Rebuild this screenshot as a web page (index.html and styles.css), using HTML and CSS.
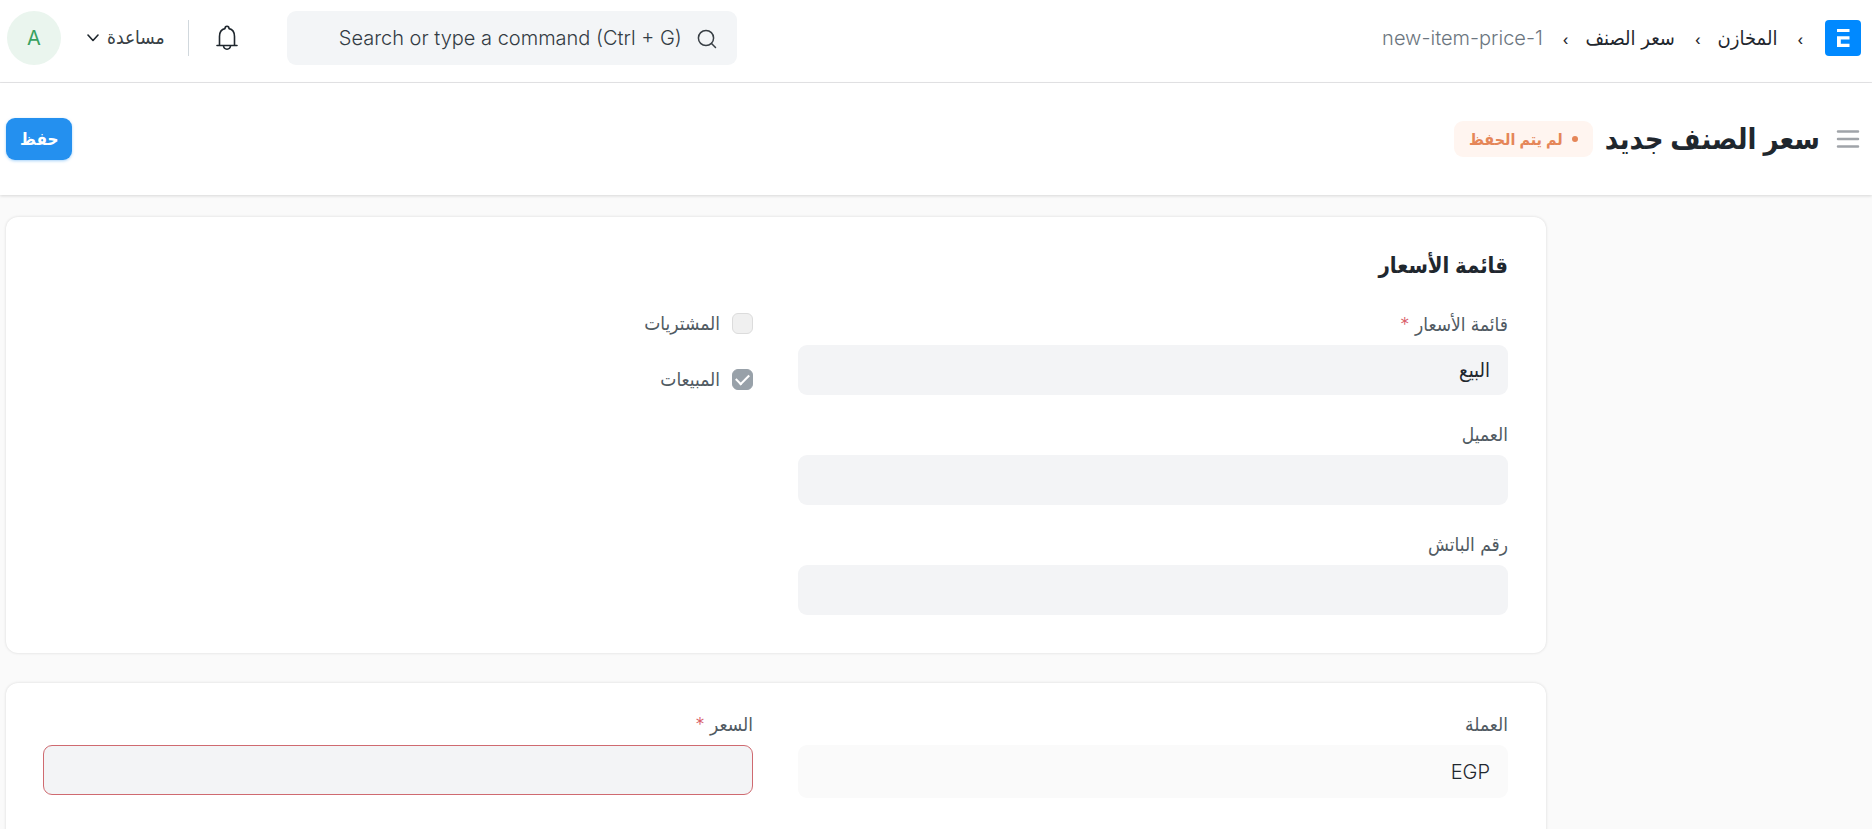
FILE: index.html
```html
<!doctype html>
<html lang="ar" dir="rtl">
<head>
    <meta charset="utf-8">
    <meta content="width=device-width,initial-scale=1" name="viewport">
    <title>سعر الصنف جديد</title>
    <link rel="stylesheet" href="styles.css">
</head>
<body>
<header class="navbar">
    <a class="logo" href="#" aria-label="ERPNext">
        <svg width="36" height="36" viewBox="0 0 36 36">
            <rect width="36" height="36" rx="4" fill="#0089ff"/>
            <path d="M12 9h12.500v3H12zM12 16.300h12.500v3.200H15.800v4.300h8.700v3.200H12z" fill="#fff"/>
        </svg>
    </a>
    <nav class="breadcrumb">
        <a href="#">المخازن</a>
        <a href="#">سعر الصنف</a>
        <a class="current" href="#"><span dir="ltr">new-item-price-1</span></a>
    </nav>
    <div class="search">
        <svg class="search-icon" width="20" height="20" viewBox="0 0 20 20" fill="none" stroke="#383f45" stroke-width="1.500">
            <circle cx="9" cy="9" r="7.600"/>
            <path d="M14.500 14.500L18.500 18.500" stroke-linecap="round"/>
        </svg>
        <input type="text" dir="ltr" aria-label="Search" placeholder="Search or type a command (Ctrl + G)">
    </div>
    <button class="bell" type="button" aria-label="الإشعارات">
        <svg width="22" height="26" viewBox="0 0 22 26" fill="none" stroke="#1f272e" stroke-width="1.600" stroke-linejoin="round" stroke-linecap="round">
            <path d="M1 20.500h20M3.500 20.500V11.500C3.500 7 6 4.200 9 3.600 9 0.500 13 0.500 13 3.600 16 4.200 18.500 7 18.500 11.500V20.500"/>
            <path d="M7.500 20.800c.4 4.500 6.600 4.500 7 0"/>
        </svg>
    </button>
    <button class="help" type="button">
        مساعدة
        <svg width="12" height="8" viewBox="0 0 12 8" fill="none" stroke="#1f272e" stroke-width="1.600" stroke-linecap="round" stroke-linejoin="round">
            <path d="M1 1l5 5.500L11 1"/>
        </svg>
    </button>
    <button class="avatar" type="button">A</button>
</header>

<div class="page-head">
    <button class="menu" type="button" aria-label="القائمة">
        <svg width="24" height="20" viewBox="0 0 24 20" stroke="#a0a4a9" stroke-width="2.500" stroke-linecap="round">
            <path d="M2 2.500h20M2 10h20M2 17.500h20"/>
        </svg>
    </button>
    <h1 class="title">سعر الصنف جديد</h1>
    <span class="indicator">لم يتم الحفظ</span>
    <button class="save" type="submit" form="item-price">حفظ</button>
</div>

<main class="page-body">
    <form class="layout" id="item-price">
        <section class="card">
            <h2 class="card-title">قائمة الأسعار</h2>
            <div class="columns">
                <div class="column">
                    <div class="field">
                        <label for="price_list">قائمة الأسعار <span class="reqd">*</span></label>
                        <input class="control" id="price_list" name="price_list" type="text" value="البيع">
                    </div>
                    <div class="field">
                        <label for="customer">العميل</label>
                        <input class="control" id="customer" name="customer" type="text">
                    </div>
                    <div class="field">
                        <label for="batch_no">رقم الباتش</label>
                        <input class="control" id="batch_no" name="batch_no" type="text">
                    </div>
                </div>
                <div class="column checks">
                    <label class="check"><input type="checkbox" name="buying" disabled> المشتريات</label>
                    <label class="check"><input type="checkbox" name="selling" checked disabled> المبيعات</label>
                </div>
            </div>
        </section>
        <section class="card">
            <div class="columns">
                <div class="column">
                    <div class="field">
                        <label for="currency">العملة</label>
                        <input class="control readonly" id="currency" name="currency" type="text" value="EGP" readonly>
                    </div>
                </div>
                <div class="column">
                    <div class="field">
                        <label for="rate">السعر <span class="reqd">*</span></label>
                        <input class="control error" id="rate" name="rate" type="text">
                    </div>
                </div>
            </div>
        </section>
    </form>
</main>
</body>
</html>
```
FILE: styles.css
```css
* {
    box-sizing: border-box;
}

body {
    margin: 0;
    background: #fafafa;
    color: #1f272e;
    font-family: Inter, "DejaVu Sans Condensed", "DejaVu Sans", sans-serif;
    font-size: 20px;
    font-weight: 300;
    line-height: 24px;
    height: 100vh;
    overflow: hidden;
}

a {
    color: inherit;
    text-decoration: none;
}

button,
input {
    font: inherit;
    color: inherit;
}

button {
    border: 0;
    padding: 0;
    background: none;
    cursor: pointer;
}

svg {
    display: block;
}

/* navbar */
.navbar {
    display: flex;
    align-items: center;
    height: 83px;
    padding: 0 11px 7px 7px;
    background: #fff;
    border-bottom: 1px solid #e6e6e8;
}

.breadcrumb {
    display: flex;
    flex: 1;
    margin-right: 22px;
}

.breadcrumb a {
    display: flex;
    align-items: center;
}

.breadcrumb a::before {
    content: "‹";
    unicode-bidi: bidi-override;
    direction: ltr;
    margin-left: 20px;
    padding-top: 4px;
    font-size: 14px;
    font-weight: 500;
    color: #1f272e;
}

.breadcrumb a + a {
    margin-right: 17px;
}

.breadcrumb .current {
    color: #6c7680;
}

.search {
    position: relative;
    width: 450px;
}

.search input {
    display: block;
    width: 100%;
    height: 54px;
    padding: 0 55px 0 16px;
    border: 0;
    border-radius: 9px;
    background: #f3f5f7;
    text-align: right;
}

.search input::placeholder {
    color: #333c44;
    opacity: 1;
}

.search-icon {
    position: absolute;
    top: 18px;
    right: 20px;
}

.bell {
    margin-right: 49px;
}

.help {
    display: flex;
    align-items: center;
    gap: 8px;
    height: 36px;
    margin-right: 27px;
    padding-right: 23px;
    border-right: 1px solid #d1d8dd;
    color: #383f45;
    font-size: 19px;
}

.avatar {
    width: 54px;
    height: 54px;
    margin-right: 26px;
    border-radius: 50%;
    background: #eaf5ee;
    color: #38a160;
    font-weight: 400;
}

/* page head */
.page-head {
    display: flex;
    align-items: center;
    height: 112px;
    padding: 0 12px 1px 6px;
    background: #fff;
    box-shadow: 0 1px 3px rgba(0, 0, 0, 0.14);
}

.title {
    margin: 0 16px 0 12px;
    font-size: 29px;
    line-height: 40px;
    font-weight: 700;
}

.indicator {
    display: flex;
    align-items: center;
    gap: 9px;
    height: 36px;
    padding: 0 15px;
    border-radius: 9px;
    background: #fff5f0;
    color: #e58658;
    font-size: 16px;
    font-weight: 600;
}

.indicator::before {
    content: "";
    width: 6px;
    height: 6px;
    border-radius: 50%;
    background: currentColor;
}

.save {
    height: 42px;
    margin-right: auto;
    padding: 0 14px;
    border-radius: 9px;
    background: #2490ef;
    box-shadow: 0 1px 3px rgba(36, 144, 239, 0.4);
    color: #fff;
    font-size: 17px;
    font-weight: 600;
}

/* form */
.page-body {
    padding: 22px 326px 0 6px;
}

.layout {
    display: flex;
    flex-direction: column;
    gap: 30px;
}

.card {
    padding: 30px 38px 38px 37px;
    border-radius: 12px;
    background: #fff;
    box-shadow: 0 0 3px rgba(0, 0, 0, 0.14);
}

.card:last-child {
    padding-bottom: 60px;
}

.card-title {
    margin: 0 0 30px;
    font-size: 22px;
    line-height: 36px;
    font-weight: 600;
}

.columns {
    display: flex;
    gap: 45px;
}

.column {
    display: flex;
    flex: 1;
    flex-direction: column;
    gap: 28px;
}

.column.checks {
    gap: 35px;
}

.field label {
    display: block;
    margin-bottom: 8px;
    font-size: 19px;
    color: #505a62;
}

.reqd {
    color: #d9606a;
}

.control {
    display: block;
    width: 100%;
    height: 50px;
    padding: 0 17px;
    border: 1px solid transparent;
    border-radius: 9px;
    background: #f3f4f6;
}

.control.readonly {
    height: 53px;
    background: #fafafa;
}

.control.error {
    border-color: #cf6a70;
}

.check {
    display: flex;
    align-items: center;
    gap: 12px;
    height: 21px;
    font-size: 19px;
    color: #505a62;
}

.check input {
    appearance: none;
    width: 21px;
    height: 21px;
    margin: 0;
    border: 1px solid #dcdcdc;
    border-radius: 6px;
    background: #f0f0f0;
}

.check input:checked {
    display: flex;
    align-items: center;
    justify-content: center;
    border-color: #98a1a9;
    background: #98a1a9;
}

.check input:checked::before {
    content: "";
    width: 11px;
    height: 6px;
    margin-bottom: 3px;
    border: solid #fff;
    border-width: 0 0 2px 2px;
    transform: rotate(-45deg);
}
```
